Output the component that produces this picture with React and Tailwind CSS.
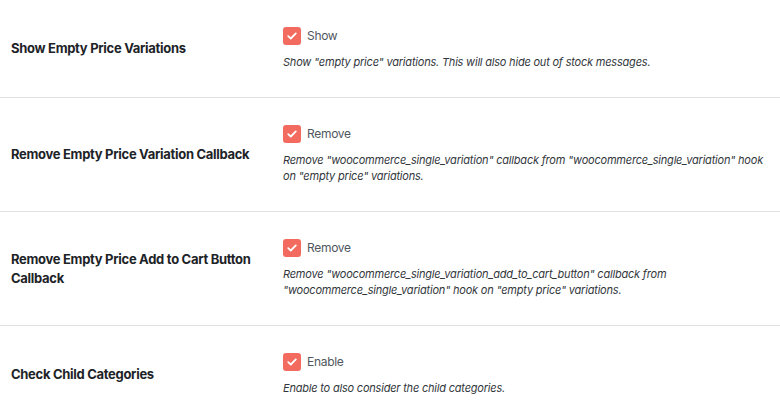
const rows = [
  {
    title: "Show Empty Price Variations",
    option: "Show",
    desc: 'Show "empty price" variations. This will also hide out of stock messages.',
  },
  {
    title: "Remove Empty Price Variation Callback",
    option: "Remove",
    desc: 'Remove "woocommerce_single_variation" callback from "woocommerce_single_variation" hook on "empty price" variations.',
  },
  {
    title: "Remove Empty Price Add to Cart Button Callback",
    option: "Remove",
    desc: 'Remove "woocommerce_single_variation_add_to_cart_button" callback from "woocommerce_single_variation" hook on "empty price" variations.',
  },
  {
    title: "Check Child Categories",
    option: "Enable",
    desc: "Enable to also consider the child categories.",
  },
];

function Checkbox() {
  return (
    <span className="flex h-[18px] w-[18px] shrink-0 items-center justify-center rounded-[3px] bg-[#f26b5e]">
      <svg width="10" height="8" viewBox="0 0 10 8" fill="none">
        <path d="M1.2 4.1 3.8 6.5 8.8 1.4" stroke="#fff" strokeWidth="1.8" strokeLinecap="round" strokeLinejoin="round" />
      </svg>
    </span>
  );
}

function SettingRow({ row, last }) {
  return (
    <div className={`flex items-center ${last ? "" : "border-b border-[#e2e2e2]"}`}>
      <div className="w-[283px] shrink-0 pl-[11px] pr-[20px] text-[13px] font-bold leading-[19px] tracking-[-0.3px] text-[#1d2327]">
        {row.title}
      </div>
      <div className="flex-1 pt-[27px] pb-[27px] pr-[10px]">
        <label className="flex h-[18px] items-center gap-[6px] text-[12px] tracking-[-0.3px] text-[#50575e]">
          <Checkbox />
          {row.option}
        </label>
        <p className="mt-[9px] text-[11px] italic leading-[16px] tracking-[-0.2px] text-[#32373c]">{row.desc}</p>
      </div>
    </div>
  );
}

export default function App() {
  return (
    <div className="w-[780px] bg-white" style={{ fontFamily: "Inter, 'Noto Sans', sans-serif" }}>
      {rows.map((row, i) => (
        <SettingRow key={i} row={row} last={i === rows.length - 1} />
      ))}
    </div>
  );
}
